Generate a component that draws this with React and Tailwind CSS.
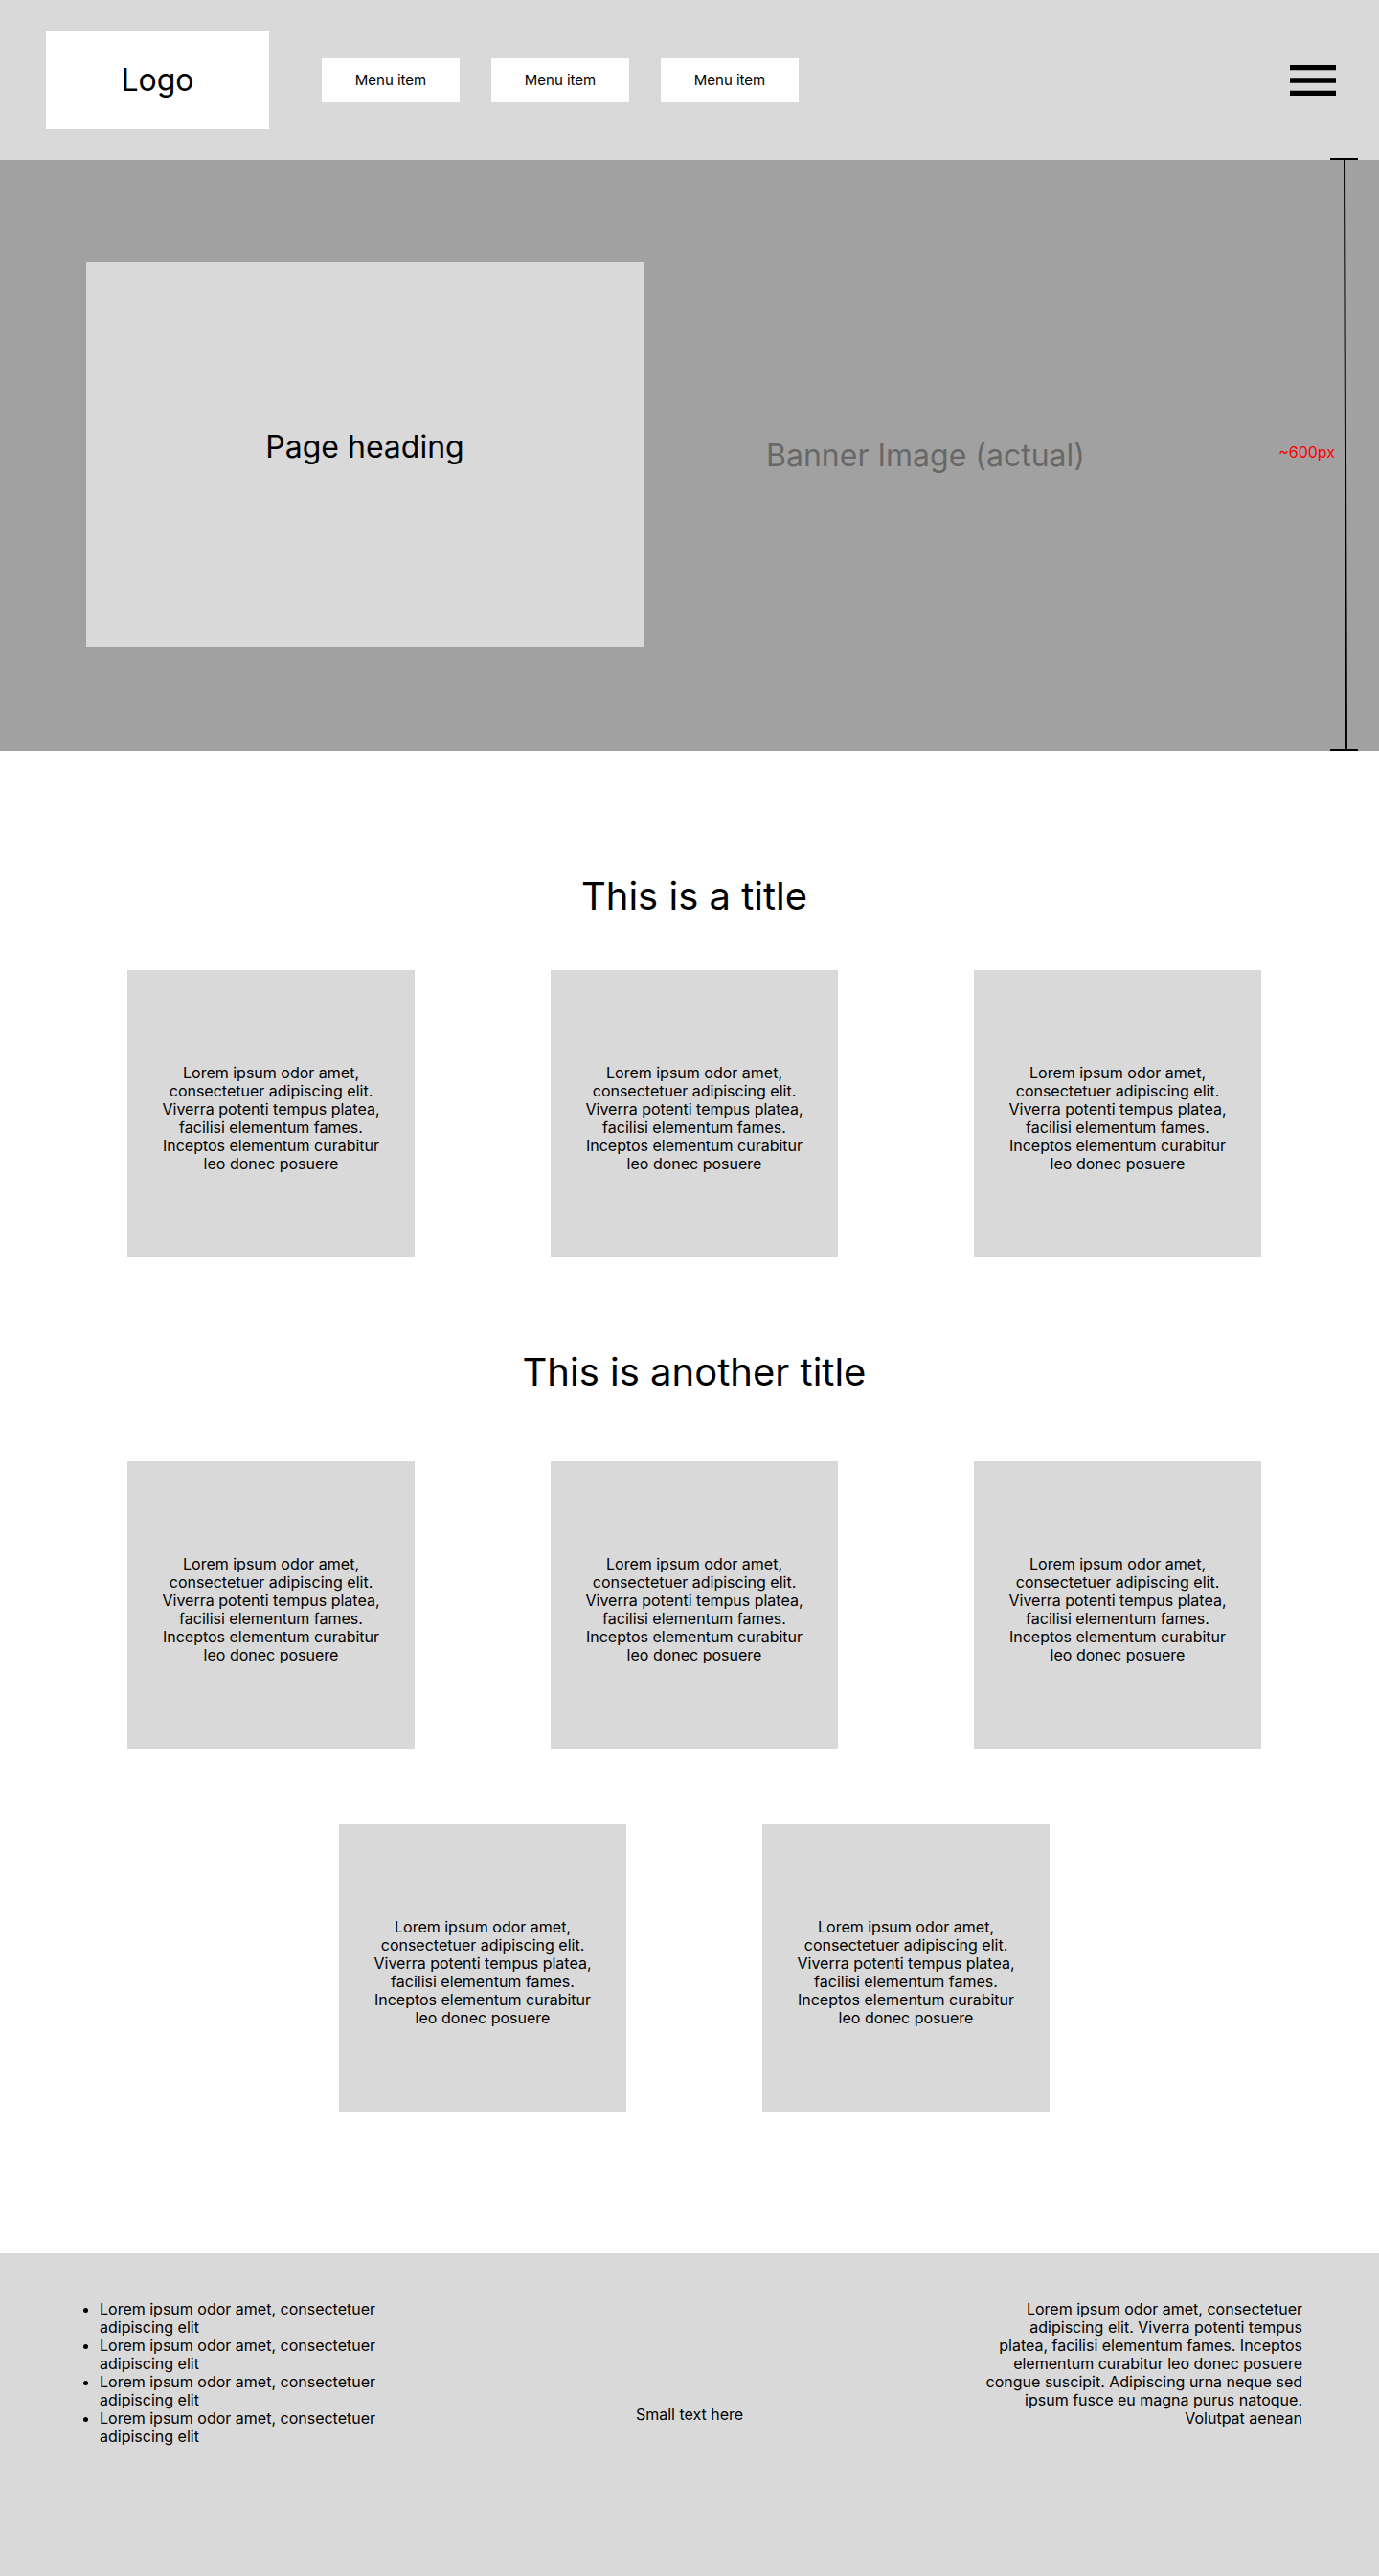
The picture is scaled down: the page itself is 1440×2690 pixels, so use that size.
const CARD_TEXT =
  "Lorem ipsum odor amet, consectetuer adipiscing elit. Viverra potenti tempus platea, facilisi elementum fames. Inceptos elementum curabitur leo donec posuere";

function Card() {
  return (
    <article className="flex h-[300px] w-[300px] items-center justify-center bg-[#d9d9d9] px-[30px] pt-2.5">
      <p className="text-center">{CARD_TEXT}</p>
    </article>
  );
}

function CardGrid({ count }) {
  return (
    <div className="flex flex-wrap justify-center gap-x-[142px] gap-y-[79px]">
      {Array.from({ length: count }, (_, i) => (
        <Card key={i} />
      ))}
    </div>
  );
}

function Header() {
  return (
    <header className="flex items-center bg-[#d9d9d9] py-8 pr-[45px] pl-12">
      <a
        href="#"
        className="flex h-[103px] w-[233px] items-center justify-center bg-white text-[32px] leading-[39px]"
      >
        Logo
      </a>
      <nav className="ml-[55px] flex gap-[33px]">
        {[1, 2, 3].map((n) => (
          <a
            key={n}
            href="#"
            className="flex h-[45px] w-36 items-center justify-center bg-white text-[15px]"
          >
            Menu item
          </a>
        ))}
      </nav>
      <button type="button" aria-label="Open menu" className="ml-auto">
        <svg width="48" height="32" viewBox="0 0 48 32" className="block">
          <path d="M0 0h48v5.33H0zM0 13.33h48v5.34H0zM0 26.67h48V32H0z" />
        </svg>
      </button>
    </header>
  );
}

function Banner() {
  return (
    <section className="relative flex items-center bg-[#a1a1a1] pt-[107px] pr-[46px] pb-[108px] pl-[90px]">
      <div className="flex h-[402px] w-[582px] items-center justify-center bg-[#d9d9d9] pb-[18px]">
        <h1 className="text-[32px] leading-[39px]">Page heading</h1>
      </div>
      <p className="ml-32 text-[32px] leading-[39px] text-[#686868]">
        Banner Image (actual)
      </p>
      <p className="ml-auto pb-1.5 text-[#ff0000]">~600px</p>
      {/* Height marker that overlaps the header's lower edge */}
      <div className="absolute -top-0.5 right-[22px] bottom-0 w-[29px]">
        <svg width="100%" height="100%" stroke="black" strokeWidth="2" className="block">
          <line x1="15" y1="0" x2="17" y2="100%" />
          <line x1="0" y1="0" x2="29" y2="0" strokeWidth="4" />
          <line x1="0" y1="100%" x2="29" y2="100%" strokeWidth="4" />
        </svg>
      </div>
    </section>
  );
}

function Footer() {
  return (
    <footer className="grid grid-cols-[1fr_auto_1fr] bg-[#d9d9d9] px-20 pt-[49px] pb-[136px]">
      <ul className="w-[324px] list-disc pl-6">
        {[1, 2, 3, 4].map((n) => (
          <li key={n}>Lorem ipsum odor amet, consectetuer adipiscing elit</li>
        ))}
      </ul>
      <p className="pt-[110px]">Small text here</p>
      <p className="w-[332px] justify-self-end text-right">
        Lorem ipsum odor amet, consectetuer adipiscing elit. Viverra potenti tempus
        platea, facilisi elementum fames. Inceptos elementum curabitur leo donec
        posuere congue suscipit. Adipiscing urna neque sed ipsum fusce eu magna
        purus natoque. Volutpat aenean
      </p>
    </footer>
  );
}

export default function App() {
  return (
    <div className="bg-white font-['Inter',sans-serif] text-base leading-[19px] text-black">
      <Header />
      <Banner />
      <main className="pt-32 pr-[123px] pb-[148px] pl-[133px]">
        <section>
          <h2 className="mb-[53px] text-center text-[40px] leading-[48px]">
            This is a title
          </h2>
          <CardGrid count={3} />
        </section>
        <section className="mt-24">
          <h2 className="mb-[69px] text-center text-[40px] leading-[48px]">
            This is another title
          </h2>
          <CardGrid count={5} />
        </section>
      </main>
      <Footer />
    </div>
  );
}
